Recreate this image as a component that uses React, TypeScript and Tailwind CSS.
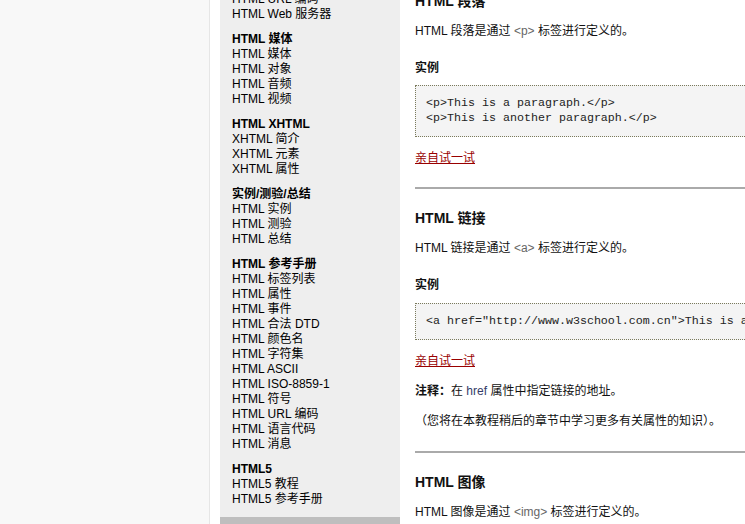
import React from 'react';

type Group = { title: string; items: string[] };

const groups: Group[] = [
    { title: 'HTML 媒体', items: ['HTML 媒体', 'HTML 对象', 'HTML 音频', 'HTML 视频'] },
    { title: 'HTML XHTML', items: ['XHTML 简介', 'XHTML 元素', 'XHTML 属性'] },
    { title: '实例/测验/总结', items: ['HTML 实例', 'HTML 测验', 'HTML 总结'] },
    {
        title: 'HTML 参考手册',
        items: [
            'HTML 标签列表',
            'HTML 属性',
            'HTML 事件',
            'HTML 合法 DTD',
            'HTML 颜色名',
            'HTML 字符集',
            'HTML ASCII',
            'HTML ISO-8859-1',
            'HTML 符号',
            'HTML URL 编码',
            'HTML 语言代码',
            'HTML 消息',
        ],
    },
    { title: 'HTML5', items: ['HTML5 教程', 'HTML5 参考手册'] },
];

const font = "font-['Liberation_Sans','Noto_Sans_CJK_SC',sans-serif]";

function Sidebar() {
    return (
        <div className="w-[180px] shrink-0 flex flex-col bg-[#eeeeee]">
            <div className="px-[12px] pb-[10px] -mt-[8px] text-[12px] leading-[15px] text-black">
                <a className="block">HTML URL 编码</a>
                <a className="block">HTML Web 服务器</a>
                {groups.map((g) => (
                    <div key={g.title} className="mt-[10px]">
                        <h2 className="font-bold">{g.title}</h2>
                        {g.items.map((item) => (
                            <a key={item} className="block">
                                {item}
                            </a>
                        ))}
                    </div>
                ))}
            </div>
            <div className="h-[20px] bg-[#bebebe]" />
        </div>
    );
}

function CodeBox({ lines, className }: { lines: string[]; className?: string }) {
    return (
        <div
            className={`border border-dotted border-[#7a7a5c] bg-[#f4f4f4] p-[10px] font-['Liberation_Mono',monospace] text-[11.67px] leading-[15px] text-[#222] whitespace-pre ${className ?? ''}`}
        >
            {lines.map((l) => (
                <div key={l}>{l}</div>
            ))}
        </div>
    );
}

function TryIt({ className }: { className?: string }) {
    return <a className={`block w-fit text-[#990000] underline ${className ?? ''}`}>亲自试一试</a>;
}

function Main() {
    return (
        <div className="w-[600px] shrink-0 bg-white px-[15px] text-[12px] leading-[15px] text-[#111]">
            <h2 className="-mt-[8px] text-[14px] leading-[18px] font-bold">HTML 段落</h2>
            <p className="mt-[14px]">
                HTML 段落是通过 <code className={`${font} text-[#666]`}>&lt;p&gt;</code> 标签进行定义的。
            </p>
            <h3 className="mt-[22px] font-bold">实例</h3>
            <CodeBox className="mt-[9px]" lines={['<p>This is a paragraph.</p>', '<p>This is another paragraph.</p>']} />
            <TryIt className="mt-[14px]" />
            <hr className="mt-[21px] h-[2px] border-0 bg-[#aaaaaa]" />

            <h2 className="mt-[20px] text-[14px] leading-[18px] font-bold">HTML 链接</h2>
            <p className="mt-[14px]">
                HTML 链接是通过 <code className={`${font} text-[#666]`}>&lt;a&gt;</code> 标签进行定义的。
            </p>
            <h3 className="mt-[22px] font-bold">实例</h3>
            <CodeBox className="mt-[10px]" lines={['<a href="http://www.w3school.com.cn">This is a link</a>']} />
            <TryIt className="mt-[14px]" />
            <p className="mt-[15px]">
                <b>注释：</b>在 <code className={`${font} text-[#353b68]`}>href</code> 属性中指定链接的地址。
            </p>
            <p className="mt-[15px]">（您将在本教程稍后的章节中学习更多有关属性的知识）。</p>
            <hr className="mt-[22px] h-[2px] border-0 bg-[#aaaaaa]" />

            <h2 className="mt-[20px] text-[14px] leading-[18px] font-bold">HTML 图像</h2>
            <p className="mt-[14px]">
                HTML 图像是通过 <code className={`${font} text-[#666]`}>&lt;img&gt;</code> 标签进行定义的。
            </p>
        </div>
    );
}

export default function App() {
    return (
        <div className={`flex w-[745px] h-[524px] overflow-hidden bg-white ${font}`}>
            <div className="w-[210px] shrink-0 bg-[#f8f8f8] border-r border-[#e6e6e6]" />
            <div className="w-[10px] shrink-0 bg-white" />
            <Sidebar />
            <Main />
        </div>
    );
}
